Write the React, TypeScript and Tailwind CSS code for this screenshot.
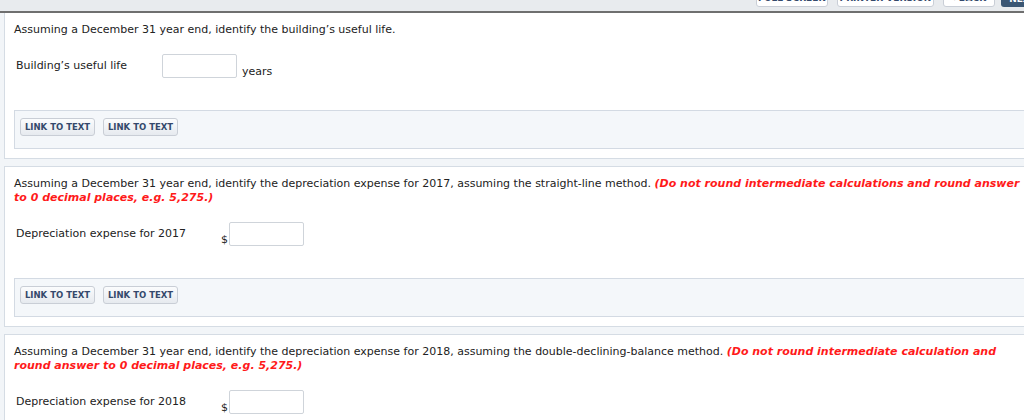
import React from "react";

const font = { fontFamily: '"DejaVu Sans", Verdana, sans-serif' };

function LinkButtons() {
  return (
    <div className="mt-[32px] h-[39px] border border-[#d3dae3] bg-[#f4f7fa] flex items-start gap-[8px] pl-[5px] pt-[7px]">
      {[0, 1].map((i) => (
        <button
          key={i}
          className="h-[18px] w-[75px] rounded-[3px] border border-[#c9ced6] bg-gradient-to-b from-[#fbfcfd] to-[#e6eaef] text-[8.5px] font-bold text-[#34496b] leading-none"
        >
          LINK TO TEXT
        </button>
      ))}
    </div>
  );
}

function AnswerRow({ label, width, prefix, suffix }: { label: string; width: string; prefix?: string; suffix?: string }) {
  return (
    <div className="flex items-start mt-[17px] ml-[2px]">
      <div className={`${width} pt-[5px] whitespace-nowrap text-[11px] leading-[14px] text-[#222]`}>{label}</div>
      <div className="flex items-end">
        {prefix && <span className="text-[11px] text-[#222] w-[8px] leading-[12px]">{prefix}</span>}
        <div className="w-[75px] h-[24px] border border-[#cfd4da] rounded-[2px] bg-white" />
        {suffix && <span className="ml-[5px] text-[11px] text-[#222] leading-[12px]">{suffix}</span>}
      </div>
    </div>
  );
}

function Panel({ children, top }: { children: React.ReactNode; top?: boolean }) {
  return (
    <div className={`bg-white border border-[#d5dce4] ${top ? "border-t-0" : ""} pl-[9px] pb-[9px]`}>
      {children}
    </div>
  );
}

function TopButton({ w, label, dark }: { w: string; label: string; dark?: boolean }) {
  return (
    <div
      className={`${w} h-[18px] mb-[4px] rounded-[3px] flex items-end justify-center pb-[3px] text-[9px] font-bold leading-none ${
        dark ? "bg-[#3b5774] text-white" : "border border-[#c9ced6] bg-white text-[#34496b]"
      }`}
    >
      {label}
    </div>
  );
}

export default function App() {
  return (
    <div className="w-screen h-[420px] overflow-hidden bg-[#f2f5f8]" style={font}>
      <div className="w-[1060px]">
        <div className="h-[11px] bg-[#e8ebee] overflow-hidden flex items-end pl-[756px] gap-[9px]">
          <TopButton w="w-[72px]" label="FULL SCREEN" />
          <TopButton w="w-[97px]" label="PRINTER VERSION" />
          <TopButton w="w-[52px]" label="‹ BACK" />
          <div className="-ml-[3px]">
            <TopButton w="w-[50px]" label="NEXT ›" dark />
          </div>
        </div>
        <div className="h-[2px] bg-[#6f6f6f]" />
        <div className="pl-[4px]">
          <Panel top>
            <div className="pt-[10px] text-[11px] leading-[14px] text-[#222]">
              Assuming a December 31 year end, identify the building’s useful life.
            </div>
            <AnswerRow label="Building’s useful life" width="w-[146px]" suffix="years" />
            <LinkButtons />
          </Panel>
          <div className="h-[7px]" />
          <Panel>
            <div className="pt-[10px] w-[1020px] text-[11px] leading-[14px] text-[#222]">
              Assuming a December 31 year end, identify the depreciation expense for 2017, assuming the straight-line method.{" "}
              <b className="italic text-[#ff1a1a]">(Do not round intermediate calculations and round answer to 0 decimal places, e.g. 5,275.)</b>
            </div>
            <AnswerRow label="Depreciation expense for 2017" width="w-[205px]" prefix="$" />
            <LinkButtons />
          </Panel>
          <div className="h-[7px]" />
          <Panel>
            <div className="pt-[10px] w-[1020px] text-[11px] leading-[14px] text-[#222]">
              Assuming a December 31 year end, identify the depreciation expense for 2018, assuming the double-declining-balance method.{" "}
              <b className="italic text-[#ff1a1a]">(Do not round intermediate calculation and round answer to 0 decimal places, e.g. 5,275.)</b>
            </div>
            <AnswerRow label="Depreciation expense for 2018" width="w-[205px]" prefix="$" />
            <LinkButtons />
          </Panel>
        </div>
      </div>
    </div>
  );
}
